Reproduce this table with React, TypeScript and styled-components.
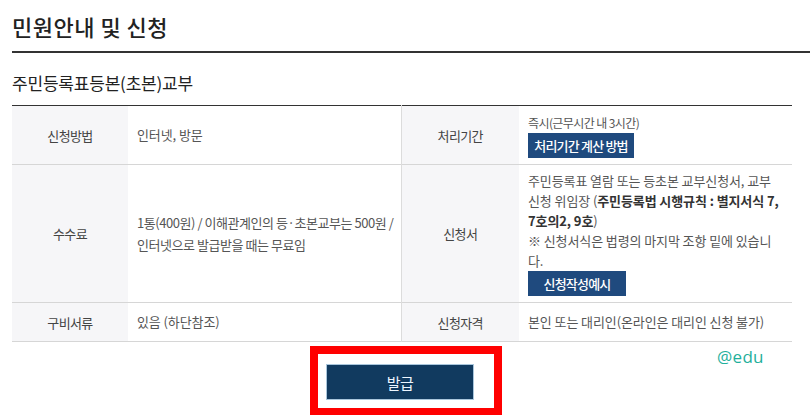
import React from 'react'
import styled, { createGlobalStyle } from 'styled-components'

const GlobalStyle = createGlobalStyle`
  html, body { margin: 0; padding: 0; background: #fff; }
  body { font-family: "Noto Sans CJK KR", "Noto Sans", sans-serif; color: #444; }
`

const Page = styled.div`
  position: relative;
  width: 810px;
  height: 415px;
  overflow: hidden;
  padding-left: 12px;
  box-sizing: border-box;
`

const PageTitle = styled.h1`
  margin: 0;
  padding: 11px 0 10px;
  font-size: 22px;
  line-height: 30px;
  font-weight: 500;
  letter-spacing: 0.5px;
  color: #222;
  border-bottom: 2px solid #333;
`

const SubTitle = styled.h2`
  margin: 18px 0 10px;
  font-size: 17px;
  line-height: 24px;
  font-weight: 400;
  letter-spacing: -0.2px;
  color: #222;
`

const InfoTable = styled.table`
  width: 780px;
  border-collapse: collapse;
  table-layout: fixed;
  border-top: 1px solid #333;
  border-bottom: 1px solid #333;
`

const Row = styled.tr<{ $h: number }>`
  height: ${p => p.$h}px;
  border-bottom: 1px solid #d6d6d6;
`

const Label = styled.th`
  background: #f6f6f8;
  text-align: center;
  font-size: 13px;
  font-weight: 400;
  letter-spacing: -0.6px;
  color: #444;
  padding: 0;
`

const Value = styled.td<{ $divider?: boolean; $lh?: number; $ls?: number }>`
  padding: 0 9px;
  font-size: 13px;
  line-height: ${p => p.$lh ?? 20}px;
  letter-spacing: ${p => p.$ls ?? -0.1}px;
  white-space: nowrap;
  color: #555;
  vertical-align: middle;
  border-right: ${p => (p.$divider ? '1px solid #dcdcdc' : 'none')};
`

const SmallNote = styled.span`
  font-size: 12px;
  letter-spacing: -0.6px;
`

const Strong = styled.b`
  font-weight: 700;
  color: #333;
`

const SmallButton = styled.span<{ $w: number }>`
  display: inline-block;
  width: ${p => p.$w}px;
  height: 25px;
  line-height: 25px;
  text-align: center;
  background: #1f4a7e;
  color: #fff;
  font-size: 13px;
  font-weight: 500;
  letter-spacing: -0.8px;
  vertical-align: top;
`

const Footer = styled.div`
  width: 780px;
  display: flex;
  justify-content: center;
  padding-top: 4px;
`

const Highlight = styled.div`
  margin-left: 8px;
  border: 8px solid #ff0000;
  padding: 10px 20px 8px 8px;
`

const IssueButton = styled.button`
  display: block;
  width: 148px;
  height: 36px;
  border: 1px solid #a9c6dc;
  background: #113a5f;
  color: #eef6ff;
  font-family: inherit;
  font-size: 15px;
  letter-spacing: -0.5px;
  cursor: pointer;
`

const Watermark = styled.span`
  position: absolute;
  left: 717px;
  top: 345px;
  font-family: "Open Sans", "Noto Sans", sans-serif;
  font-size: 17px;
  letter-spacing: 0.3px;
  color: #1fb09c;
`

export default function App() {
  return (
    <Page>
      <GlobalStyle />
      <PageTitle>민원안내 및 신청</PageTitle>
      <SubTitle>주민등록표등본(초본)교부</SubTitle>
      <InfoTable>
        <colgroup>
          <col style={{ width: 116 }} />
          <col style={{ width: 273 }} />
          <col style={{ width: 118 }} />
          <col style={{ width: 273 }} />
        </colgroup>
        <tbody>
          <Row $h={59}>
            <Label>신청방법</Label>
            <Value $divider>인터넷, 방문</Value>
            <Label>처리기간</Label>
            <Value>
              <SmallNote>즉시(근무시간 내 3시간)</SmallNote>
              <br />
              <SmallButton $w={106}>처리기간 계산 방법</SmallButton>
            </Value>
          </Row>
          <Row $h={138}>
            <Label>수수료</Label>
            <Value $divider $lh={22} $ls={-0.45}>
              1통(400원) / 이해관계인의 등·초본교부는 500원 /
              <br />
              인터넷으로 발급받을 때는 무료임
            </Value>
            <Label>신청서</Label>
            <Value>
              주민등록표 열람 또는 등초본 교부신청서, 교부
              <br />
              신청 위임장 (<Strong>주민등록법 시행규칙 : 별지서식 7,</Strong>
              <br />
              <Strong>7호의2, 9호</Strong>)
              <br />
              ※ 신청서식은 법령의 마지막 조항 밑에 있습니
              <br />
              다.
              <br />
              <SmallButton $w={98}>신청작성예시</SmallButton>
            </Value>
          </Row>
          <Row $h={39}>
            <Label>구비서류</Label>
            <Value $divider>있음 (하단참조)</Value>
            <Label>신청자격</Label>
            <Value>본인 또는 대리인(온라인은 대리인 신청 불가)</Value>
          </Row>
        </tbody>
      </InfoTable>
      <Footer>
        <Highlight>
          <IssueButton>발급</IssueButton>
        </Highlight>
      </Footer>
      <Watermark>@edu</Watermark>
    </Page>
  )
}
